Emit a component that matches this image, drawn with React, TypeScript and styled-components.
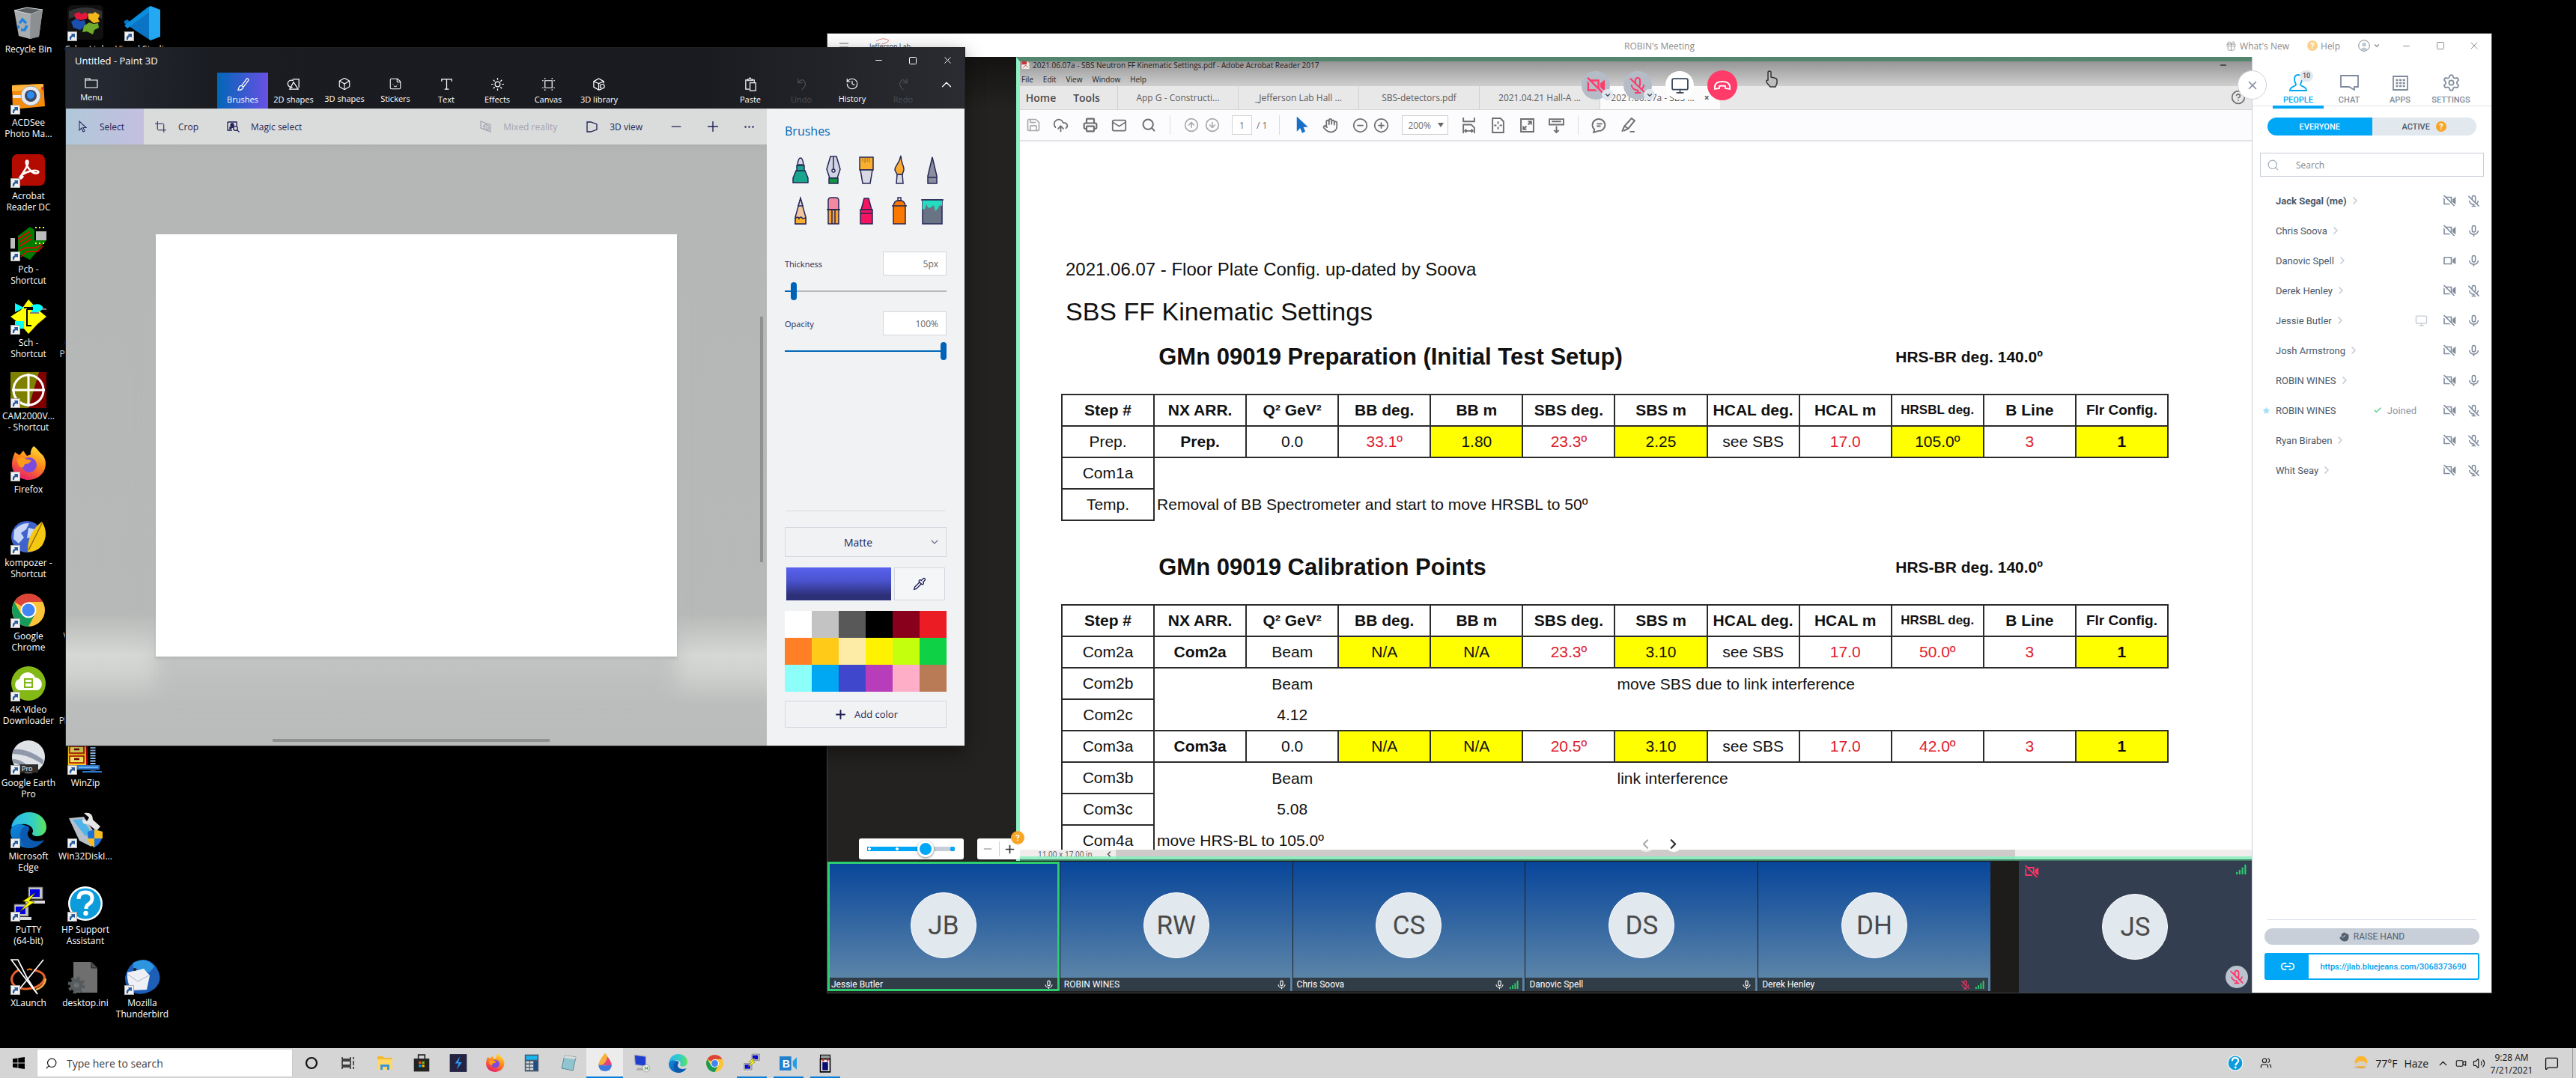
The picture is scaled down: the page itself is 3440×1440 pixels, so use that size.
import React from "react";
import styled, { createGlobalStyle, css } from "styled-components";
import {
  ChevronDown, ChevronLeft, ChevronRight, ChevronUp, X, Minus, Plus, Square, Ellipsis,
  CloudUpload, Printer, Mail, Search, CircleArrowUp, CircleArrowDown, Hand, CircleMinus, CirclePlus,
  Save, Gift, Monitor, Link2, Pipette, Crop, History,
  Sticker, Box, Star, Check, Settings, Volume2, Users,
  MessageSquare, CircleQuestionMark, Video,
} from "lucide-react";

const ui = '"Open Sans", "Noto Sans", sans-serif';
const meet = 'Roboto, "Liberation Sans", sans-serif';
const doc = '"Liberation Sans", Arial, sans-serif';

const Global = createGlobalStyle`
  * { box-sizing: border-box; }
  html, body { margin: 0; background: #000; }
  body { font-family: ${ui}; overflow: hidden; }
  button, input, select { font: inherit; color: inherit; margin: 0; }
  button { border: 0; background: none; padding: 0; cursor: pointer; }
  svg { display: block; flex: none; }
  h1, h2, h3, p, ul { margin: 0; padding: 0; }
  ul { list-style: none; }
`;

/* ---------- colour artwork ---------- */

type ArtProps = { s?: number };
const Svg = ({ s = 48, vb = "0 0 48 48", children }: { s?: number; vb?: string; children: React.ReactNode }) => (
  <svg width={s} height={s} viewBox={vb} aria-hidden="true">{children}</svg>
);

const RecycleArt = () => (
  <Svg>
    <path d="M5 7 22 3 43 6 38 42 26 45 11 41Z" fill="#a9adb0" />
    <path d="M5 7 22 3 43 6 27 12Z" fill="#5c5f61" stroke="#d9dcde" />
    <path d="M27 12 43 6 38 42 26 45Z" fill="#8b8f92" />
    <g fill="none" stroke="#1d84dd" strokeWidth="3.4">
      <path d="M12 24 16 19 21 24" /><path d="M22 27 19 33 14 33" /><path d="M11 31 10 27" />
    </g>
  </Svg>
);
const PuzzleArt = () => (
  <Svg>
    <rect width="48" height="46" rx="6" fill="#111" />
    <path d="M2 8q22-10 44 0v10q-22-8-44 0z" fill="#555" opacity=".5" />
    <path d="M9 12l6-3 4 3 5-3 4 4-2 5-8 2-7-2z" fill="#e2173d" />
    <path d="M28 11l6 0 3-2 6 4-2 5 2 4-8 2-7-6z" fill="#f0b81c" />
    <path d="M5 22l7-4 5 3 6-1 2 7-8 6-9-3z" fill="#1a4fae" />
    <path d="M22 28l7-5 6 2 6-1 1 6-6 3-2 6-8-4-6 1z" fill="#6eaa2c" />
  </Svg>
);
const VsCodeArt = () => (
  <Svg>
    <path d="M35 1 11 25 4 19 0 21 0 24 35 47z" fill="#0b74c4" />
    <path d="M0 27 4 31 35 8V1L31 3z" fill="#0a8ddc" />
    <path d="M35 1 48 6V42L35 47 33 45V3z" fill="#25a8f2" />
  </Svg>
);
const CameraArt = () => (
  <Svg>
    <path d="M2 9 44 7 46 37 3 41Z" fill="#f58a0c" /><path d="M2 9 44 7 44 14 2 17Z" fill="#ffb43c" />
    <path d="M3 22h14v4H3z" fill="#e9e9e9" />
    <circle cx="27" cy="23" r="13" fill="#e7e9ee" stroke="#9aa0ab" /><circle cx="27" cy="23" r="8" fill="#3b4a66" />
    <circle cx="27" cy="22" r="5" fill="#2c8cf0" /><circle cx="43" cy="13" r="2" fill="#c33" />
  </Svg>
);
const AcrobatArt = () => (
  <Svg>
    <rect x="2" y="3" width="44" height="42" rx="7" fill="#b30b00" />
    <path d="M12 35c4-6 14-20 11-23-3-2-4 5 4 13 6 6 12 3 10 1-3-3-17 0-23 6-3 4 0 5 3 0" fill="none" stroke="#fff" strokeWidth="2.6" />
  </Svg>
);
const PcbArt = () => (
  <Svg>
    <path d="M10 14 26 2 32 6V20H48L26 46 10 38Z" fill="#007c00" />
    <path d="M34 8h14v12H34z" fill="#bdbdbd" /><path d="M0 17h6v14H0z" fill="#bdbdbd" />
    <path d="M33 3h14M33 24h14" stroke="#ff0" strokeWidth="2" strokeDasharray="2 3" />
    <g stroke="#e00" strokeWidth="1.6" fill="none"><path d="M10 18 26 8M11 23 27 13M12 28 28 18M12 34 20 30H34L42 25M14 42 22 35H36L43 28" /></g>
  </Svg>
);
const SchArt = () => (
  <Svg>
    <path d="M0 24 14 15 24 1 36 14 48 24 36 34 24 47 12 33Z" fill="#ff0" />
    <path d="M6 6 18 12 6 18ZM27 9q14-5 17 4-6 7-16 5zM6 30h12v10H6z" fill="#0ff" />
    <path d="M22 14h8M22 14v22h6M18 12h12" stroke="#000" strokeWidth="2" fill="none" /><path d="M26 19h12M42 14h6" stroke="#808080" strokeWidth="2" />
  </Svg>
);
const CamArt = () => (
  <Svg>
    <rect width="48" height="48" fill="#808000" /><path d="M38 0H48V48H24Z" fill="#800000" />
    <circle cx="24" cy="24" r="20" fill="none" stroke="#fff" strokeWidth="3" /><path d="M24 2V46M2 24H46" stroke="#fff" strokeWidth="3" />
  </Svg>
);
const FirefoxArt = ({ s }: ArtProps) => (
  <Svg s={s}>
    <defs><linearGradient id="ff" x1=".8" y1="0" x2=".3" y2="1"><stop offset="0" stopColor="#ffe53a" /><stop offset=".45" stopColor="#ff8b16" /><stop offset="1" stopColor="#e6186c" /></linearGradient></defs>
    <path d="M6 9 12 13 17 7 22 14 27 12C26 6 30 2 31 1 36 4 37 8 41 11 47 16 48 24 46 31 43 40 34 46 24 46 12 46 2 37 2 26 2 18 4 14 6 9Z" fill="url(#ff)" />
    <circle cx="25" cy="26" r="10" fill="#7d4ae0" /><path d="M8 18q7-4 12 0l8 2q-3 5-9 5-2 8-8 2z" fill="#ff9a1b" />
  </Svg>
);
const KompozerArt = () => (
  <Svg>
    <circle cx="22" cy="24" r="21" fill="#3f63cc" /><path d="M5 15q9-10 20-9l-4 8-7 5 4 6-7 8-7-6zM24 12l8 2-2 10-8 2z" fill="#c8d6fa" />
    <path d="M42 4q10 16 0 32-8 9-19 8 0-14 4-22 6-12 15-18z" fill="#f4c912" /><path d="M42 6 24 42" stroke="#a06b00" strokeWidth="1.6" />
  </Svg>
);
const ChromeArt = ({ s }: ArtProps) => (
  <Svg s={s}>
    <circle cx="24" cy="24" r="22" fill="#fbc43a" /><path d="M24 24 5 13A22 22 0 0 1 43 13H24z" fill="#dc4437" />
    <path d="M5 13A22 22 0 0 0 24 46L33 29 24 24 14 29z" fill="#169c5a" />
    <circle cx="24" cy="24" r="10.5" fill="#fff" /><circle cx="24" cy="24" r="8.5" fill="#4285f4" />
  </Svg>
);
const FourKArt = () => (
  <Svg>
    <circle cx="24" cy="24" r="23" fill="#84b816" /><path d="M11 33a8 8 0 0 1 1-15 11 11 0 0 1 21-2 9 9 0 0 1 4 17z" fill="#fff" />
    <path d="M19 18h10v11H19zM19 23h10" fill="none" stroke="#84b816" strokeWidth="2" />
  </Svg>
);
const EarthArt = () => (
  <Svg>
    <circle cx="24" cy="24" r="22" fill="#dfe2e6" /><path d="M4 14q18-2 40 14l-1 6Q22 20 3 20zM3 27q15 0 28 18l-8 1Q14 33 3 32z" fill="#8f99a9" />
    <path d="M12 34h25v11H12z" fill="#2d2d2d" /><text x="15" y="43" fontSize="9" fill="#fff" fontFamily={ui}>Pro</text>
  </Svg>
);
const EdgeArt = ({ s }: ArtProps) => (
  <Svg s={s}>
    <defs>
      <linearGradient id="e1" x1="0" x2="1"><stop offset="0" stopColor="#2bb7f0" /><stop offset=".6" stopColor="#33cfc5" /><stop offset="1" stopColor="#5fe45a" /></linearGradient>
      <linearGradient id="e2" x1="0" x2="1" y2="1"><stop offset="0" stopColor="#0e8be0" /><stop offset="1" stopColor="#0a4f9e" /></linearGradient>
    </defs>
    <path d="M1 20C3 8 13 0 25 0 39 0 48 10 48 20 48 28 42 32 36 32 31 32 29 30 29 28 32 25 29 17 20 16 11 15 4 19 1 20Z" fill="url(#e1)" />
    <path d="M0 26C0 17 10 14 18 17 24 19 26 23 24 25 20 28 22 40 36 40 40 40 43 38 45 37 40 44 33 48 25 48 11 48 0 38 0 26Z" fill="url(#e2)" />
    <path d="M13 30c0-7 5-12 9-12 4 1 4 5 2 7-4 5 2 18 21 12-6 8-14 11-20 11-8-2-12-10-12-18z" fill="#0b5ab0" />
  </Svg>
);
const PuttyArt = ({ s }: ArtProps) => (
  <Svg s={s}>
    <path d="M24 2h19v16H24z" fill="#c4c4c4" stroke="#555" /><path d="M26 5h13v10H26z" fill="#0000e0" /><path d="M20 20h26v4H20z" fill="#dcdcdc" />
    <path d="M5 25h19v16H5z" fill="#c4c4c4" stroke="#555" /><path d="M7 28h13v10H7z" fill="#0000e0" /><path d="M2 42h26v4H2z" fill="#dcdcdc" />
    <path d="M34 9 16 21 24 22 12 35 32 22 25 20z" fill="#ff0" stroke="#220" strokeWidth=".6" />
  </Svg>
);
const XArt = () => (
  <Svg>
    <path d="M17 13C4 15-3 27 5 35c8 8 30 6 38-4 5-7 2-14-12-16" fill="none" stroke="#e8622a" strokeWidth="3" />
    <path d="M34 41q12-4 13-15" fill="none" stroke="#f5b04a" strokeWidth="2.5" />
    <path d="M1 1H10L22 25 36 47 16 21ZM44 1 22 28 8 45" stroke="#fff" strokeWidth="1.7" fill="#000" /><path d="M22 15q4-3 7 0" stroke="#f70" strokeWidth="2" fill="none" />
  </Svg>
);
const WinZipArt = () => (
  <Svg>
    <path d="M0 2h26v34H0z" fill="#fbd21a" stroke="#b00" strokeWidth="2" /><path d="M3 10h19v9H3zM3 23h19v9H3z" fill="#fff36b" stroke="#b00" strokeWidth="1.5" />
    <path d="M9 14h7M9 27h7" stroke="#700" strokeWidth="2.5" /><path d="M34 4v40" stroke="#a6d2ff" strokeWidth="7" strokeDasharray="2 1.5" />
    <path d="M14 36h28v4H14zM20 44h26" stroke="#2c78d0" strokeWidth="2" fill="#6cb4f8" />
  </Svg>
);
const DiskArt = () => (
  <Svg>
    <path d="M2 8 22 6 38 30 32 46 16 38z" fill="#b9bfca" /><path d="M7 10 20 9 32 27 24 32z" fill="#4fb4e9" />
    <path d="M22 1q12-2 12 9l10 9-5 6-11-9q-9 1-8-7l6 3 3-5z" fill="#e7e7e7" />
    <path d="M27 26 36 23 47 26Q48 40 36 47 26 40 27 26Z" fill="#1c70d6" /><path d="M36 23 47 26V35H36ZM36 35V47Q27 42 27 35Z" fill="#f9bd1e" />
  </Svg>
);
const HelpArt = ({ s }: ArtProps) => (
  <Svg s={s}>
    <circle cx="24" cy="24" r="23" fill="#fff" /><circle cx="24" cy="24" r="20.5" fill="#0c9bdb" />
    <path d="M15 18q0-9 9-9t9 8q0 5-5 8-3 2-3 6" fill="none" stroke="#fff" strokeWidth="5" /><circle cx="24.5" cy="37" r="3.2" fill="#fff" />
  </Svg>
);
const IniArt = () => (
  <Svg>
    <path d="M8 4h24l8 8v33H8z" fill="#6f6f6f" /><path d="M32 4v8h8" fill="#4d4d4d" stroke="#222" />
    <circle cx="12" cy="35" r="6" fill="none" stroke="#555b5f" strokeWidth="5" /><circle cx="12" cy="35" r="9.5" fill="none" stroke="#555b5f" strokeWidth="4" strokeDasharray="4 3.5" />
  </Svg>
);
const BirdArt = () => (
  <Svg>
    <path d="M12 5Q30-5 42 10 54 28 40 40 26 50 12 45 0 38 1 24 4 12 12 5Z" fill="#1d5fb8" /><path d="M12 5Q30-4 40 10l-6 8L12 12z" fill="#2d94e0" />
    <path d="M4 18 26 13 34 22 30 41 10 42Q3 32 4 18Z" fill="#eef0f5" /><path d="M4 20 18 30 33 22" fill="none" stroke="#aab4c6" />
    <circle cx="14" cy="14" r="2" fill="#222" />
  </Svg>
);
const BlankArt = () => <Svg><rect x="8" y="6" width="32" height="36" fill="#446" /></Svg>;

/* ---------- line artwork ---------- */

const CamOff = ({ s = 18, c = "#7f8b9c", bg = "#fff" }) => (
  <svg width={s} height={s} viewBox="0 0 18 18" fill="none" stroke={c} strokeWidth="1.6" aria-hidden="true">
    <path d="M2 4.5h9.5v9H2z" /><path d="M14 7.5 16.5 5.5v7L14 10.5z" fill={c} />
    <path d="M1 3.500 14.500 17" stroke={bg} strokeWidth="2" /><path d="M1.500 2 15.500 16" />
  </svg>
);
const CamOn = ({ s = 18, c = "#7f8b9c" }) => (
  <svg width={s} height={s} viewBox="0 0 18 18" fill="none" stroke={c} strokeWidth="1.6" aria-hidden="true">
    <path d="M2 5h9.5v8.5H2z" /><path d="M14 8 16.5 6v6.5L14 11z" fill={c} />
  </svg>
);
const MicOn = ({ s = 18, c = "#7f8b9c" }) => (
  <svg width={s} height={s} viewBox="0 0 18 18" fill="none" stroke={c} strokeWidth="1.6" aria-hidden="true">
    <rect x="6.7" y="1.5" width="4.6" height="9" rx="2.3" /><path d="M2.8 8.5a6.2 5.4 0 0 0 12.400 0M9 14v3" />
  </svg>
);
const MicOff = ({ s = 18, c = "#7f8b9c", bg = "#fff" }) => (
  <svg width={s} height={s} viewBox="0 0 18 18" fill="none" stroke={c} strokeWidth="1.6" aria-hidden="true">
    <rect x="6.7" y="1.5" width="4.6" height="9" rx="2.3" /><path d="M2.8 8.500a6.2 5.4 0 0 0 12.400 0M9 14v3M6 16.5h6" />
    <path d="M1 3.500 15 17.500" stroke={bg} strokeWidth="1.800" /><path d="M1.500 2 16.500 16.500" />
  </svg>
);
const Signal = ({ s = 14 }) => (
  <svg width={s} height={s} viewBox="0 0 14 14" aria-hidden="true"><path d="M1 10h2v3H1zM4.500 7.500h2V13h-2zM8 4.500h2V13H8zM11.500 1h2v12h-2z" fill="#2ecc71" /></svg>
);
const Pointer = ({ s = 16, c = "#2f2f63", fill = "none" }) => (
  <svg width={s} height={s} viewBox="0 0 16 16" aria-hidden="true"><path d="M4 1v12l3-3 2 5 2-1-2-4.500h4z" fill={fill} stroke={c} strokeWidth="1.1" /></svg>
);
const Line = ({ d, s = 20, w = 1.3, children }: { d: string; s?: number; w?: number; children?: React.ReactNode }) => (
  <svg width={s} height={s} viewBox="0 0 20 20" fill="none" stroke="currentColor" strokeWidth={w} aria-hidden="true"><path d={d} />{children}</svg>
);

/* ---------- desktop ---------- */

const Desktop = styled.div`
  display: flex; flex-direction: column; height: 100vh; min-height: 720px; background: #000; overflow: hidden;
`;
const Workspace = styled.main`flex: 1; position: relative; min-height: 0; overflow: hidden;`;
const IconGrid = styled.ul`
  display: grid; grid-template-columns: repeat(3, 76px); grid-template-rows: repeat(14, 98px);
`;
const IconItem = styled.li<{ $c: number; $r: number }>`
  grid-column: ${p => p.$c}; grid-row: ${p => p.$r}; display: flex; flex-direction: column; align-items: center; padding-top: 7px;
  color: #fff; font-size: 12px; line-height: 15px; text-align: center; white-space: pre;
`;
const Picture = styled.span`position: relative; display: block; margin-bottom: 3px;`;
const Badge = styled.span`
  position: absolute; left: 0; bottom: 0; width: 13px; height: 13px; background: #f2f2f2; border: 1px solid #aaa;
`;
const ShortcutMark = () => (
  <Badge><svg width="11" height="11" viewBox="0 0 11 11"><path d="M2 10Q1 5 5 4L4 2 9 2 9 7 7 6Q4 6 4 10Z" fill="#2b5c9e" /></svg></Badge>
);
const icons: [number, number, string, React.ReactNode, boolean][] = [
  [1, 1, "Recycle Bin", <RecycleArt />, false],
  [1, 2, "ACDSee\nPhoto Ma...", <CameraArt />, true],
  [1, 3, "Acrobat\nReader DC", <AcrobatArt />, true],
  [1, 4, "Pcb -\nShortcut", <PcbArt />, true],
  [1, 5, "Sch -\nShortcut", <SchArt />, true],
  [1, 6, "CAM2000V...\n- Shortcut", <CamArt />, true],
  [1, 7, "Firefox", <FirefoxArt />, true],
  [1, 8, "kompozer -\nShortcut", <KompozerArt />, true],
  [1, 9, "Google\nChrome", <ChromeArt />, true],
  [1, 10, "4K Video\nDownloader", <FourKArt />, true],
  [1, 11, "Google Earth\nPro", <EarthArt />, true],
  [1, 12, "Microsoft\nEdge", <EdgeArt />, true],
  [1, 13, "PuTTY\n(64-bit)", <PuttyArt />, true],
  [1, 14, "XLaunch", <XArt />, true],
  [2, 1, "CyberLink\nMedia", <PuzzleArt />, true],
  [2, 5, "CyberLink\nPowerDirect", <BlankArt />, false],
  [2, 9, "VLC media", <BlankArt />, false],
  [2, 10, "Adobe\nPhotoshop E", <BlankArt />, false],
  [2, 11, "WinZip", <WinZipArt />, true],
  [2, 12, "Win32DiskI...", <DiskArt />, true],
  [2, 13, "HP Support\nAssistant", <HelpArt />, true],
  [2, 14, "desktop.ini", <IniArt />, false],
  [3, 1, "Visual Studio", <VsCodeArt />, true],
  [3, 14, "Mozilla\nThunderbird", <BirdArt />, true],
];

/* ---------- Paint 3D window ---------- */

const PaintWindow = styled.section`
  position: absolute; left: 88px; top: 64px; width: 1200px; max-width: calc(100% - 88px); height: 932px;
  display: flex; flex-direction: column; background: #f1f2f4; box-shadow: 0 0 0 1px #222, 0 8px 24px rgba(0,0,0,.45); overflow: hidden;
`;
const PaintHeader = styled.header`
  height: 81px; flex: none; color: #fff; background: linear-gradient(90deg, #282c35, #1a1c22 16%, #191b21 70%, #2a2c31);
`;
const PaintTitle = styled.div`
  height: 33px; display: flex; align-items: center; padding-left: 12px; font-size: 13px;
  h1 { font: inherit; flex: 1; }
`;
const WinButton = styled.button<{ $w?: number }>`
  width: ${p => p.$w ?? 46}px; height: 32px; display: grid; place-items: center;
`;
const Ribbon = styled.div`height: 48px; display: flex;`;
const RibbonTab = styled.button<{ $on?: boolean; $dim?: boolean }>`
  width: 68px; height: 48px; display: flex; flex-direction: column; align-items: center; padding-top: 6px; gap: 3px;
  font-size: 11px; line-height: 16px; white-space: nowrap; color: ${p => (p.$dim ? "#4b4d53" : "#fff")};
  ${p => p.$on && css`background: linear-gradient(90deg, #0166b8, #6a50e4);`}
`;
const Spacer = styled.div<{ $w?: number }>`${p => (p.$w ? css`width: ${p.$w}px; flex: none;` : css`flex: 1;`)}`;
const PaintBody = styled.div`flex: 1; display: grid; grid-template-columns: minmax(0, 1fr) 264px; min-height: 0;`;
const PaintMain = styled.div`display: flex; flex-direction: column; min-height: 0;`;
const ToolBar = styled.div`
  height: 48px; flex: none; display: flex; background: #dadcdc; color: #1f1f55; font-size: 12px;
`;
const ToolButton = styled.button<{ $on?: boolean; $dim?: boolean; $w?: number }>`
  display: flex; align-items: center; gap: 15px; padding: 0 14px; white-space: nowrap; color: ${p => (p.$dim ? "#a3a4b0" : "#1f1f55")};
  ${p => p.$w && css`width: ${p.$w}px; justify-content: center; padding: 0;`}
  ${p => p.$on && css`width: 104px; background: linear-gradient(90deg, #b0c8d9, #c4bfe0);`}
`;
const CanvasArea = styled.div`
  position: relative; flex: 1; display: grid; place-items: center; min-height: 0;
  background: linear-gradient(#b0b2b1, #b5b7b6 12px, #b7b9b8 78%, #d6d8d5 85%, #d0d2cf 88%, #bcbebd 93%, #b9bbba);
`;
const Canvas = styled.div`width: calc(100% - 240px); aspect-ratio: 696 / 564; background: #fff; box-shadow: 0 62px 24px 0 rgba(184,187,186,.7), 0 3px 3px rgba(150,150,150,.5);`;
const VBar = styled.i`position: absolute; right: 5px; top: 230px; width: 4px; height: 328px; background: #8f9191;`;
const HBar = styled.i`position: absolute; bottom: 5px; left: 276px; width: 370px; height: 4px; background: #8f9191;`;
const SidePanel = styled.aside`
  background: #f1f2f4; padding: 18px 24px 24px; display: flex; flex-direction: column; color: #1f1f55; font-size: 11px;
  h2 { font-size: 16px; font-weight: 400; line-height: 24px; color: #0067b8; }
`;
const BrushGrid = styled.div`display: grid; grid-template-columns: repeat(5, 44px); margin: 19px 0 0 -1px; row-gap: 14px;`;
const Brush = styled.button`display: grid; place-items: center; height: 41px;`;
const Field = styled.div`display: grid; grid-template-columns: 1fr 85px; align-items: center; margin-top: 34px; & + & { margin-top: 15px; }`;
const ValueBox = styled.input`
  height: 32px; width: 85px; border: 1px solid #d3d6de; background: #fff; text-align: right; padding: 0 10px; color: #666; font-size: 12px;
`;
const Range = styled.input<{ $v: number }>`
  grid-column: 1 / 3; appearance: none; width: 100%; height: 24px; margin-top: 9px; background: transparent;
  &::-webkit-slider-runnable-track { height: 2px; background: linear-gradient(90deg, #0067b8 ${p => p.$v}%, #b5b7bb ${p => p.$v}%); }
  &::-webkit-slider-thumb { appearance: none; width: 8px; height: 24px; margin-top: -11px; border-radius: 4px; background: #0063b8; }
`;
const Rule = styled.hr`border: 0; border-top: 1px solid #d6d9df; margin: auto 2px 21px; width: calc(100% - 4px);`;
const SelectWrap = styled.label`
  position: relative; display: block; svg { position: absolute; right: 8px; top: 12px; pointer-events: none; color: #6a6a86; }
`;
const Matte = styled.select`
  appearance: none; width: 100%; height: 40px; border: 1px solid #d3d6de; background: transparent; text-align-last: center; font-size: 14px; padding-right: 20px;
`;
const ColorRow = styled.div`display: grid; grid-template-columns: 140px 68px; gap: 4px; margin: 14px 2px;`;
const CurrentColor = styled.button`height: 44px; background: linear-gradient(#5862ee, #4b53cf 40%, #2c3077 85%);`;
const Picker = styled.button`height: 44px; border: 1px solid #d3d6de; background: #f5f6f8; display: grid; place-items: center;`;
const Palette = styled.div`display: grid; grid-template-columns: repeat(6, 36px); grid-auto-rows: 36px;`;
const Swatch = styled.button<{ $c: string }>`background: ${p => p.$c};`;
const AddColor = styled.button`
  height: 36px; margin-top: 12px; border: 1px solid #d3d6de; display: flex; align-items: center; justify-content: center; gap: 9px; font-size: 13px;
`;
const palette = ["#ffffff", "#c3c3c3", "#585858", "#000000", "#88001b", "#ec1c24", "#ff7f27", "#ffca18", "#fdeca6", "#fff200", "#c4ff0e", "#0ed145", "#8cfffb", "#00a8f3", "#3f48cc", "#b83dba", "#ffaec8", "#b97a56"];

const ink = { stroke: "#262657", strokeWidth: 1.5 };
const brushes: [string, React.ReactNode][] = [
  ["Marker", <><path d="M12 37V31L16 21H28L32 31V37Z" fill="#19a68c" {...ink} /><path d="M17 14H27V21H17Z" fill="#19a68c" {...ink} /><path d="M18 13Q19 4 22 4T26 13Z" fill="#d5d6e0" {...ink} /></>],
  ["Calligraphy pen", <><path d="M18 2H26L31 19 27 31H17L13 19Z" fill="#d0d3e2" {...ink} /><path d="M22 3V19" {...ink} /><circle cx="22" cy="21" r="2" fill="#fff" {...ink} /><path d="M16 31H28V38H16Z" fill="#12953f" {...ink} /></>],
  ["Oil brush", <><path d="M13 3H31V20H13Z" fill="#fbb02d" {...ink} /><path d="M14 20H30L27 38H17Z" fill="#d8d9e2" {...ink} /><path d="M17 4v5M20 4v7M23 4v5M26 4v6" stroke="#a2701c" /></>],
  ["Watercolor", <><path d="M24 1C22 12 16 14 16 20L19 26H26L28 20C29 15 24 12 24 1Z" fill="#fbab2d" {...ink} /><path d="M19 26H26L27 38H18Z" fill="#d8d9e2" {...ink} /></>],
  ["Pixel pen", <><path d="M22 3 28 28V38H16V28Z" fill="#8b8e9b" {...ink} /><path d="M16 30H28" {...ink} /></>],
  ["Pencil", <><path d="M22 3 29 28V37H15V28Z" fill="#f1c5a0" {...ink} /><path d="M15 30q3-4 5 0 2-4 5 0l4-1V37H15Z" fill="#fbb02d" {...ink} /><path d="M19 13h6l-3-10z" fill="#d5d6e0" {...ink} /></>],
  ["Eraser", <><path d="M15 18V6Q15 2 19 2H25Q29 2 29 6V18Z" fill="#f389a0" {...ink} /><path d="M15 18H29V37H15Z" fill="#fba22d" {...ink} /><path d="M13 18H31M20 18V37M24 18V37" {...ink} /></>],
  ["Crayon", <><path d="M19 3H25L29 18H15Z" fill="#f5145f" {...ink} /><path d="M14 18H30V37H14ZM14 23H30" fill="#f5145f" {...ink} /></>],
  ["Spray can", <><path d="M14 13Q15 7 19 6H25Q29 7 30 13V37H14Z" fill="#fa7800" {...ink} /><path d="M12 13H32M20 2h4v4h-4z" {...ink} fill="none" /></>],
  ["Fill", <><path d="M9 5H35V37H9Z" fill="#687484" {...ink} /><path d="M9 5H35V13L32 12 29 17 26 20 24 12 20 15 17 16 14 11 12 17 9 18Z" fill="#26dcc0" /><path d="M7 5H37" {...ink} /></>],
];

const ribbonTabs: [string, React.ReactNode][] = [
  ["Brushes", <Line s={19} d="M15.500 2q3 0 2 3L10.500 14 8 12zM8 12q-4 0-4 4l-1 2q6 1 7.500-4" />],
  ["2D shapes", <Line s={19} d="M8 3H17V15M9.500 7 4 17H16ZM8 14A5 5 0 1 1 9 5" />],
  ["3D shapes", <Box size={18} strokeWidth={1.5} />],
  ["Stickers", <Sticker size={18} strokeWidth={1.4} />],
  ["Text", <Line s={19} d="M3 6V3H17V6M10 3V17M7 17H13" />],
  ["Effects", <Line s={19} d="M10 1V4M10 16V19M1 10H4M16 10H19M4 4 6 6M14 14 16 16M16 4 14 6M4 16 6 14"><circle cx="10" cy="10" r="3.500" /></Line>],
  ["Canvas", <Line s={19} d="M5 5H15V15H5ZM1 5H3M17 5H19M1 15H3M17 15H19M5 1V3M15 1V3M5 17V19M15 17V19" />],
  ["3D library", <Line s={19} d="M13 17 9 18 2 14V6L9 2 16 6V9M2 6 9 9 16 6M9 9V18"><circle cx="14" cy="13" r="3" /></Line>],
];

const Paint = () => (
  <PaintWindow aria-label="Untitled - Paint 3D">
    <PaintHeader>
      <PaintTitle>
        <h1>Untitled - Paint 3D</h1>
        <WinButton aria-label="Minimize"><Minus size={13} strokeWidth={1.8} /></WinButton>
        <WinButton aria-label="Maximize"><Square size={12} strokeWidth={2} /></WinButton>
        <WinButton aria-label="Close"><X size={15} strokeWidth={1.5} /></WinButton>
      </PaintTitle>
      <Ribbon>
        <RibbonTab>
          <svg width="18" height="16" viewBox="0 0 18 16" fill="none" stroke="#fff" strokeWidth="1.2"><path d="M1 2H7V4H17V14H1Z M1 4H7" /></svg>Menu
        </RibbonTab>
        <Spacer $w={134} />
        {ribbonTabs.map(([t, i], n) => <RibbonTab key={t} $on={n === 0}>{i}{t}</RibbonTab>)}
        <Spacer />
        <RibbonTab><Line s={19} d="M8 17H3V4H6M12 4H15V7M6 5V3H8L9 1 10 3H12V5ZM9 8H17V19H9Z" />Paste</RibbonTab>
        <RibbonTab $dim><Line s={19} d="M5 2V8H11M5 8Q10 1 14 6T10 18" />Undo</RibbonTab>
        <RibbonTab><History size={18} strokeWidth={1.5} />History</RibbonTab>
        <RibbonTab $dim><Line s={19} d="M15 2V8H9M15 8Q10 1 6 6T10 18" />Redo</RibbonTab>
        <WinButton $w={48} aria-label="Collapse ribbon"><ChevronUp size={22} strokeWidth={1.4} /></WinButton>
      </Ribbon>
    </PaintHeader>
    <PaintBody>
      <PaintMain>
        <ToolBar>
          <ToolButton $on><Pointer />Select</ToolButton>
          <ToolButton><Crop size={17} strokeWidth={1.4} />Crop</ToolButton>
          <Spacer $w={10} />
          <ToolButton>
            <svg width="17" height="17" viewBox="0 0 17 17" fill="none" stroke="#1f1f55" strokeWidth="1.3"><path d="M1 2h12v6M1 2v11h6" /><circle cx="7" cy="6" r="2" fill="#1f1f55" /><path d="M4 12V9h5" fill="#1f1f55" /><circle cx="11.5" cy="10.5" r="2.8" /><path d="m13.500 12.500 3 3" /></svg>
            Magic select
          </ToolButton>
          <Spacer />
          <ToolButton $dim>
            <svg width="17" height="18" viewBox="0 0 17 18" fill="none" stroke="currentColor" strokeWidth="1.2"><path d="M2 2 15 7V16L2 11ZM6 7.500 9 6 13 9V13L9 14 6 11ZM6 7.500 10 10V14" /></svg>
            Mixed reality
          </ToolButton>
          <Spacer $w={10} />
          <ToolButton>
            <svg width="17" height="17" viewBox="0 0 17 17" fill="none" stroke="currentColor" strokeWidth="1.3"><path d="M7 15H2V2H7L15 5V12Z" /></svg>
            3D view
          </ToolButton>
          <Spacer $w={6} />
          <ToolButton $w={49} aria-label="Zoom out"><Minus size={20} strokeWidth={1.5} /></ToolButton>
          <ToolButton $w={49} aria-label="Zoom in"><Plus size={22} strokeWidth={1.5} /></ToolButton>
          <ToolButton $w={48} aria-label="More"><Ellipsis size={17} strokeWidth={1.5} /></ToolButton>
        </ToolBar>
        <CanvasArea><Canvas /><VBar /><HBar /></CanvasArea>
      </PaintMain>
      <SidePanel>
        <h2>Brushes</h2>
        <BrushGrid>
          {brushes.map(([n, art]) => <Brush key={n} aria-label={n}><svg width="44" height="40" viewBox="0 0 44 40">{art}</svg></Brush>)}
        </BrushGrid>
        <Field>
          <label htmlFor="thick">Thickness</label><ValueBox aria-label="Thickness value" defaultValue="5px" />
          <Range id="thick" type="range" $v={6} defaultValue={4} />
        </Field>
        <Field>
          <label htmlFor="opac">Opacity</label><ValueBox aria-label="Opacity value" defaultValue="100%" />
          <Range id="opac" type="range" $v={100} defaultValue={100} />
        </Field>
        <Rule />
        <SelectWrap><Matte aria-label="Material"><option>Matte</option></Matte><ChevronDown size={16} strokeWidth={1.6} /></SelectWrap>
        <ColorRow>
          <CurrentColor aria-label="Current color" />
          <Picker aria-label="Eyedropper"><Pipette size={18} strokeWidth={1.7} /></Picker>
        </ColorRow>
        <Palette>{palette.map(c => <Swatch key={c} $c={c} aria-label={c} />)}</Palette>
        <AddColor><Plus size={19} strokeWidth={2.4} />Add color</AddColor>
      </SidePanel>
    </PaintBody>
  </PaintWindow>
);

/* ---------- meeting window ---------- */

const MeetWindow = styled.section`
  position: absolute; left: 1105px; right: 113px; top: 45px; bottom: 74px; display: flex; flex-direction: column;
  background: #fff; font-family: ${meet}; box-shadow: 0 0 0 1px #444;
`;
const MeetTitle = styled.header`
  height: 31px; flex: none; display: grid; grid-template-columns: 1fr auto 1fr; align-items: center; font-family: ${ui}; font-size: 12px; color: #8c8c8c;
  h1 { font: inherit; }
`;
const Brand = styled.div`
  display: flex; align-items: center; gap: 28px; padding-left: 16px; font: 9px ${ui}; color: #444;
  > svg { color: #999; } span { position: relative; } span svg { position: absolute; left: 8px; top: -4px; }
`;
const TitleTools = styled.div`display: flex; justify-content: flex-end; align-items: center;`;
const TitleItem = styled.button<{ $mr?: number }>`display: flex; align-items: center; gap: 4px; margin-right: ${p => p.$mr ?? 0}px;`;
const Dot = styled.span<{ $s?: number; $soft?: boolean }>`
  width: ${p => p.$s ?? 14}px; height: ${p => p.$s ?? 14}px; border-radius: 50%; background: ${p => (p.$soft ? "#fbd28c" : "#f8a526")}; color: #fff;
  font: bold 11px ${meet}; display: grid; place-items: center;
`;
const MeetBody = styled.div`flex: 1; min-height: 0; display: grid; grid-template-columns: minmax(0, 1fr) 320px;`;
const Stage = styled.div`position: relative; display: flex; flex-direction: column; min-width: 0; min-height: 0; background: #242220;`;
const ShareRow = styled.div`flex: 1; min-height: 0; padding-left: 252px; display: flex; background: linear-gradient(#141312, #242220 70px);`;
const Share = styled.div`
  position: relative; flex: 1; min-width: 0; display: flex; flex-direction: column; background: #fff; overflow: hidden;
  border-left: 5px solid #8ff0c4; border-top: 6px solid #54866f; font-family: ${ui};
`;
const PdfTitle = styled.div`
  height: 33px; flex: none; padding: 0 2px; font-size: 10px; color: #222; background: linear-gradient(#969696, #cfcfcf);
`;
const PdfName = styled.div`display: flex; align-items: center; gap: 4px; height: 10px; line-height: 10px; span { flex: 1; }`;
const PdfMenu = styled.nav`display: flex; gap: 13px; height: 17px; margin-top: 5px; align-items: center; color: #1c1c1c;`;
const PdfTabs = styled.nav`
  height: 32px; flex: none; display: flex; align-items: stretch; background: #e9e8e9; border-bottom: 1px solid #d6d6d6; font-size: 12px; color: #5c5c5c;
`;
const PdfTab = styled.button<{ $on?: boolean; $w: number; $home?: boolean }>`
  width: ${p => p.$w}px; white-space: nowrap; display: flex; align-items: center; justify-content: center; gap: 13px;
  border-left: ${p => (p.$home ? 0 : 1)}px solid #d0d0d0; background: ${p => (p.$on ? "#fcfbfc" : "transparent")};
  ${p => p.$home && css`font-size: 14px; font-weight: 600; color: #4c4c4c;`}
`;
const PdfTools = styled.div`
  height: 42px; flex: none; display: flex; align-items: center; background: #fcfbfd; border-bottom: 2px solid #e3e3e5; color: #6e6e6e; font-size: 12px;
`;
const PdfTool = styled.button<{ $w?: number; $dim?: boolean }>`
  width: ${p => p.$w ?? 39}px; height: 30px; display: grid; place-items: center; color: ${p => (p.$dim ? "#a9a9a9" : "#6e6e6e")};
`;
const Sep = styled.i<{ $l: number; $r: number }>`width: 1px; height: 26px; background: #dcdcde; margin: 0 ${p => p.$r}px 0 ${p => p.$l}px;`;
const PageBox = styled.input`width: 27px; height: 26px; border: 1px solid #d5d5d5; background: #fff; text-align: center; padding: 0; margin-right: 6px;`;
const ZoomBox = styled.label`
  position: relative; margin: 0 8px 0 14px; svg { position: absolute; right: 6px; top: 10px; pointer-events: none; }
  select { appearance: none; width: 62px; height: 26px; border: 1px solid #cfcfcf; background: #fff; padding: 0 7px; }
`;
const Page = styled.div`
  flex: 1; min-height: 0; overflow: hidden; padding: 156px 111px 0 55px; font-family: ${doc}; color: #111; background: #fff;
`;
const DocNote = styled.p`padding-left: 6px; font-size: 24px; line-height: 30px;`;
const DocTitle = styled.h2`padding-left: 6px; margin-top: 21px; font-size: 34px; font-weight: 400; line-height: 40px;`;
const DocHead = styled.div`
  display: grid; grid-template-columns: repeat(12, 1fr); align-items: center; margin: 23px 0 31px; white-space: nowrap;
  h3 { grid-column: 2 / 10; padding-left: 7px; font-size: 31px; line-height: 36px; }
  strong { grid-column: 10 / 13; padding-left: 5px; font-size: 21px; }
`;
const DocTable = styled.table`
  width: 100%; table-layout: fixed; border-collapse: collapse; font-size: 21px; line-height: 24px; margin-bottom: 44px;
  tr { height: 42px; }
`;
const Cell = styled.td<{ $line?: boolean; $y?: boolean; $red?: boolean; $b?: boolean; $left?: boolean }>`
  padding: 0 0 0 ${p => (p.$left ? 3 : 0)}px; white-space: nowrap; text-align: ${p => (p.$left ? "left" : "center")};
  ${p => p.$line && css`border: 2px solid #2b2b2b;`}
  ${p => p.$y && css`background: #ff0;`}
  ${p => p.$red && css`color: #e0202c;`}
  ${p => p.$b && css`font-weight: 700;`}
`;
const HeadCell = styled.th<{ $s?: number }>`
  padding: 0; border: 2px solid #2b2b2b; white-space: nowrap; font-size: ${p => p.$s ?? 21}px;
`;
const PdfStatus = styled.div`
  height: 15px; flex: none; display: flex; align-items: flex-start; background: #f1eded; font-size: 10px; line-height: 12px; color: #555; overflow: hidden;
  span { padding-left: 24px; width: 113px; }
  i { margin-left: 3px; height: 15px; width: 73%; background: #cfcbcb; }
`;
const ShareBottom = styled.i`position: absolute; left: 0; right: 0; bottom: 0; height: 6px; background: #7ff0bcd0; border-bottom: 2px solid #3e7c60;`;
const HandPointer = styled.svg`position: absolute; left: calc(56% + 72px); top: 12px;`;

const Controls = styled.div`position: absolute; top: 49px; left: 0; right: 0; height: 40px; display: flex; justify-content: center; align-items: center; gap: 18px; pointer-events: none;`;
const Round = styled.button<{ $bg: string; $s?: number }>`
  position: relative; width: ${p => p.$s ?? 38}px; height: ${p => p.$s ?? 38}px; border-radius: 50%; background: ${p => p.$bg}; display: grid; place-items: center; color: #fff;
`;
const MiniDrop = styled.span`
  position: absolute; right: -4px; bottom: -1px; width: 15px; height: 15px; border-radius: 50%; background: #dfe6ed; color: #39465a; display: grid; place-items: center;
`;
const Pager = styled.div`position: absolute; left: 0; right: 0; bottom: 188px; display: flex; justify-content: center; gap: 15px; pointer-events: none;`;
const PageArrow = styled.button<{ $dim?: boolean }>`
  width: 22px; height: 22px; border-radius: 50%; background: ${p => (p.$dim ? "#ffffffa0" : "#fff")}; color: ${p => (p.$dim ? "#aaa" : "#333")}; display: grid; place-items: center;
`;
const Floaters = styled.div`position: absolute; left: 42px; bottom: 178px; display: flex; gap: 18px; align-items: flex-end;`;
const LayoutBox = styled.label`width: 140px; height: 28px; border-radius: 3px; background: #fff; display: grid; place-items: center;`;
const LayoutRange = styled.input`
  appearance: none; width: 137px; height: 22px; background: transparent;
  &::-webkit-slider-runnable-track {
    height: 6px; border-radius: 3px;
    background: radial-gradient(circle 2px at 12px 3px, #fff 99%, transparent), radial-gradient(circle 2px at 49px 3px, #fff 99%, transparent),
      radial-gradient(circle 3px at 123px 3px, #00a7f7 99%, transparent), linear-gradient(90deg, transparent 9px, #00a7f7 9px 84px, #c5ced9 84px 126px, transparent 126px);
  }
  &::-webkit-slider-thumb { appearance: none; width: 22px; height: 22px; margin-top: -8px; border-radius: 50%; background: #00a7f7; border: 3px solid #fff; box-shadow: 0 1px 3px #0008; }
`;
const ZoomPair = styled.div`
  position: relative; width: 57px; height: 28px; border-radius: 3px; background: #fff; display: grid; grid-template-columns: 1fr 1fr; color: #333;
  button { display: grid; place-items: center; }
  button + button { border-left: 1px solid #c9d1da; height: 20px; margin-top: 4px; }
`;
const HelpDot = styled(Dot)`position: absolute; right: -6px; top: -10px;`;

const Strip = styled.div`height: 176px; flex: none; display: flex; gap: 1px; background: #1d1c1b;`;
const Tile = styled.figure<{ $on?: boolean }>`
  position: relative; flex: 1 1 0; min-width: 0; margin: 1px 0 2px; display: flex; flex-direction: column; background: linear-gradient(#08469a, #5b84a8 156px);
  outline: ${p => (p.$on ? "3px solid #2ecc71" : "none")}; outline-offset: -3px; z-index: ${p => (p.$on ? 1 : 0)};
`;
const TileMain = styled.div`flex: 1; display: grid; place-items: center; padding-top: 15px;`;
const Avatar = styled.span`
  width: 88px; height: 88px; border-radius: 50%; background: #e1e8ee; border: 1px solid #fff; color: #4a4a4a; font-size: 35px; display: grid; place-items: center;
`;
const Caption = styled.figcaption`
  height: 18px; padding: 0 5px; display: flex; align-items: center; gap: 6px; background: #303c46; color: #fff; font-size: 12px; margin: 0 3px 0 0;
  span { flex: 1; }
`;
const SelfTile = styled.div`
  position: relative; width: 311px; flex: none; background: #333f50; display: grid; place-items: center;
  > svg:nth-of-type(1) { position: absolute; left: 7px; top: 4px; } > svg:nth-of-type(2) { position: absolute; right: 7px; top: 4px; }
`;
const SelfMic = styled.span`position: absolute; right: 5px; bottom: 6px; width: 30px; height: 30px; border-radius: 50%; background: #bcc3ce; display: grid; place-items: center;`;

const People = styled.aside`border-left: 1px solid #c9ced6; background: #fff; display: flex; flex-direction: column; color: #4a5769;`;
const PeopleTabs = styled.nav`height: 66px; display: flex; padding: 22px 20px 0 27px; border-bottom: 1px solid #e0e4ea;`;
const PeopleTab = styled.button<{ $on?: boolean }>`
  position: relative; flex: 1; height: 47px; display: flex; flex-direction: column; align-items: center; gap: 4px; font-size: 11px; font-weight: 500;
  color: ${p => (p.$on ? "#00a7f7" : "#7f8b9c")}; border-bottom: 4px solid ${p => (p.$on ? "#00a7f7" : "transparent")};
`;
const Count = styled.span`
  position: absolute; left: 36px; top: -4px; width: 18px; height: 15px; border-radius: 8px; background: #e1e8ee; color: #4a5769; font-size: 9px; line-height: 15px;
`;
const Segment = styled.div`height: 24px; margin: 15px 20px 0; border-radius: 12px; overflow: hidden; display: grid; grid-template-columns: 1fr 1fr; font-size: 11px; font-weight: 500;`;
const SegButton = styled.button<{ $on?: boolean }>`
  display: flex; align-items: center; justify-content: center; gap: 8px; background: ${p => (p.$on ? "#00a7f7" : "#e1e8ee")}; color: ${p => (p.$on ? "#fff" : "#4a5769")};
`;
const SearchBox = styled.label`
  height: 32px; margin: 23px 10px 0; border: 1px solid #c5cdd8; display: flex; align-items: center; gap: 20px; padding-left: 8px; color: #9aa7b8;
  input { border: 0; outline: 0; flex: 1; min-width: 0; font: 12px ${ui}; color: #777; background: none; } input::placeholder { color: #858585; opacity: 1; }
`;
const List = styled.ul`margin-top: 12px; flex: 1;`;
const PersonRow = styled.li<{ $me?: boolean }>`
  height: 40px; padding: 0 15px 0 13px; display: grid; grid-template-columns: 18px auto 1fr auto; align-items: center; font-size: 13px; font-weight: ${p => (p.$me ? 700 : 400)};
`;
const PersonName = styled.span`display: flex; align-items: center; gap: 3px; color: #4a5769; svg { color: #c5cdd8; }`;
const Joined = styled.span`display: flex; align-items: center; gap: 7px; justify-content: flex-end; color: #8b96a5; padding-right: 35px;`;
const Devices = styled.span`display: flex; align-items: center; gap: 15px; > svg:first-child:nth-last-child(3) { margin-right: 5px; }`;
const PeopleFoot = styled.footer`padding: 12px 16px 17px; &::before { content: ""; display: block; height: 1px; margin: -12px 4px 11px; background: #d9e0e8; }`;
const RaiseHand = styled.button`
  width: 100%; height: 22px; border-radius: 11px; background: #c8cfd8; color: #55606f; font-size: 12px; display: flex; align-items: center; justify-content: center; gap: 6px;
`;
const LinkBox = styled.div`
  margin-top: 11px; height: 36px; border: 2px solid #00a7f7; border-radius: 3px; display: grid; grid-template-columns: 57px 1fr; background: #fff;
  button { background: #00a7f7; color: #fff; display: grid; place-items: center; }
  a { display: grid; place-items: center; color: #00a0ee; font-size: 11px; font-weight: 500; text-decoration: none; }
`;
const EdgeClose = styled.button`
  position: absolute; right: 300px; top: 49px; width: 39px; height: 39px; border-radius: 50%; background: #fff; border: 1px solid #cbd3dd; color: #7f8b9c; display: grid; place-items: center;
`;

const heads = ["Step #", "NX ARR.", "Q² GeV²", "BB deg.", "BB m", "SBS deg.", "SBS m", "HCAL deg.", "HCAL m", "HRSBL deg.", "B Line", "Flr Config."];
const headSize: Record<string, number> = { "HRSBL deg.": 17, "Flr Config.": 19 };
type Row = { cells: string[]; yellow: number[]; red: number[] } | { step: string; mid?: string; note?: string; wide?: string };
const prep: Row[] = [
  { cells: ["Prep.", "Prep.", "0.0", "33.1º", "1.80", "23.3º", "2.25", "see SBS", "17.0", "105.0º", "3", "1"], yellow: [4, 6, 9, 11], red: [3, 5, 8, 10] },
  { step: "Com1a", wide: "" },
  { step: "Temp.", wide: "Removal of BB Spectrometer and start to move HRSBL to 50º" },
];
const calib: Row[] = [
  { cells: ["Com2a", "Com2a", "Beam", "N/A", "N/A", "23.3º", "3.10", "see SBS", "17.0", "50.0º", "3", "1"], yellow: [3, 4, 6, 11], red: [5, 8, 9, 10] },
  { step: "Com2b", mid: "Beam", note: "move SBS due to link interference" },
  { step: "Com2c", mid: "4.12" },
  { cells: ["Com3a", "Com3a", "0.0", "N/A", "N/A", "20.5º", "3.10", "see SBS", "17.0", "42.0º", "3", "1"], yellow: [3, 4, 6, 11], red: [5, 8, 9, 10] },
  { step: "Com3b", mid: "Beam", note: "link interference" },
  { step: "Com3c", mid: "5.08" },
  { step: "Com4a", wide: "move HRS-BL to 105.0º" },
];
const SettingsTable = ({ rows }: { rows: Row[] }) => (
  <DocTable>
    <thead><tr>{heads.map(h => <HeadCell key={h} $s={headSize[h]}>{h}</HeadCell>)}</tr></thead>
    <tbody>
      {rows.map((r, i) => "cells" in r ? (
        <tr key={i}>{r.cells.map((c, n) => <Cell key={n} $line $y={r.yellow.includes(n)} $red={r.red.includes(n)} $b={n === 1 || n === 11}>{c}</Cell>)}</tr>
      ) : r.wide !== undefined ? (
        <tr key={i}><Cell $line>{r.step}</Cell><Cell $left colSpan={11}>{r.wide}</Cell></tr>
      ) : (
        <tr key={i}><Cell $line>{r.step}</Cell><Cell /><Cell>{r.mid}</Cell><Cell colSpan={3} /><Cell $left colSpan={6}>{r.note}</Cell></tr>
      ))}
    </tbody>
  </DocTable>
);

const SharedPdf = () => (
  <Share>
    <PdfTitle>
      <PdfName>
        <svg width="11" height="10" viewBox="0 0 12 12"><path d="M0 0h9l3 3v9H0z" fill="#eee" /><path d="M0 0h8v5H0z" fill="#c33" /><path d="m2 11 4-5 4 4" stroke="#c33" fill="none" /></svg>
        <span>2021.06.07a - SBS Neutron FF Kinematic Settings.pdf - Adobe Acrobat Reader 2017</span>
        <Minus size={12} color="#000" /><Spacer $w={26} />
      </PdfName>
      <PdfMenu>{["File", "Edit", "View", "Window", "Help"].map(m => <button key={m}>{m}</button>)}</PdfMenu>
    </PdfTitle>
    <PdfTabs>
      <PdfTab $home $w={56}>Home</PdfTab><PdfTab $home $w={66}>Tools</PdfTab><Spacer $w={8} />
      <PdfTab $w={161}>App G - Constructi...</PdfTab><PdfTab $w={161}>_Jefferson Lab Hall ...</PdfTab>
      <PdfTab $w={161}>SBS-detectors.pdf</PdfTab><PdfTab $w={161}>2021.04.21 Hall-A ...</PdfTab>
      <PdfTab $on $w={161}>2021.06.07a - SBS ...<b>×</b></PdfTab>
      <Spacer />
      <PdfTool $w={37} aria-label="Help"><CircleQuestionMark size={20} /></PdfTool>
    </PdfTabs>
    <PdfTools>
      <PdfTool $w={35} $dim aria-label="Save"><Save size={20} /></PdfTool>
      <PdfTool aria-label="Share"><CloudUpload size={21} /></PdfTool>
      <PdfTool aria-label="Print"><Printer size={20} strokeWidth={2.6} /></PdfTool>
      <PdfTool aria-label="Mail"><Mail size={21} /></PdfTool>
      <PdfTool aria-label="Find"><Search size={20} strokeWidth={2.4} /></PdfTool>
      <Sep $l={9} $r={14} />
      <PdfTool $w={28} $dim aria-label="Previous page"><CircleArrowUp size={20} /></PdfTool>
      <PdfTool $w={28} $dim aria-label="Next page"><CircleArrowDown size={20} /></PdfTool>
      <Spacer $w={12} />
      <PageBox aria-label="Page" defaultValue="1" />/ 1
      <Sep $l={16} $r={9} />
      <PdfTool aria-label="Select"><Pointer s={22} c="#1770c8" fill="#1770c8" /></PdfTool>
      <PdfTool aria-label="Pan"><Hand size={21} /></PdfTool>
      <Spacer $w={6} />
      <PdfTool $w={28} aria-label="Zoom out"><CircleMinus size={21} /></PdfTool>
      <PdfTool $w={28} aria-label="Zoom in"><CirclePlus size={21} /></PdfTool>
      <ZoomBox><select aria-label="Zoom"><option>200%</option></select><svg width="8" height="6"><path d="M0 0H8L4 6Z" fill="#666" /></svg></ZoomBox>
      <PdfTool aria-label="Fit width"><Line s={21} w={1.8} d="M3 0V5H17V0M3 20V9H13L17 13V20M5 17H15M7 15 5 17 7 19M13 15 15 17 13 19" /></PdfTool>
      <PdfTool aria-label="Fit page"><Line s={21} w={1.8} d="M3 1H13L17 5V19H3ZM10 5V8M10 12V15M5 10H8M12 10H15" /></PdfTool>
      <PdfTool aria-label="Full screen"><Line s={21} w={1.9} d="M2 2H18V18H2ZM11 9 15 5M11 5H15V9M9 11 5 15M5 11V15H9" /></PdfTool>
      <PdfTool aria-label="Read mode"><Line s={21} w={1.8} d="M1 2H19V9H1ZM4 5H16M10 11V19M7 16 10 19 13 16" /></PdfTool>
      <Sep $l={9} $r={8} />
      <PdfTool aria-label="Comment"><Line s={21} w={1.8} d="M4 15A8 7.500 0 1 1 9 17L3 19ZM7 8H14M7 11H12" /></PdfTool>
      <PdfTool aria-label="Highlight"><Line s={21} w={1.8} d="M2 18 5 11 14 1 18 4 10 14 4 17M5 11 10 14M12 18H18" /></PdfTool>
    </PdfTools>
    <Page>
      <DocNote>2021.06.07 - Floor Plate Config. up-dated by Soova</DocNote>
      <DocTitle>SBS FF Kinematic Settings</DocTitle>
      <DocHead><h3>GMn 09019 Preparation (Initial Test Setup)</h3><strong>HRS-BR deg. 140.0º</strong></DocHead>
      <SettingsTable rows={prep} />
      <DocHead><h3>GMn 09019 Calibration Points</h3><strong>HRS-BR deg. 140.0º</strong></DocHead>
      <SettingsTable rows={calib} />
    </Page>
    <PdfStatus><span>11.00 x 17.00 in</span><ChevronLeft size={12} strokeWidth={3} /><i /></PdfStatus>
    <ShareBottom />
    <HandPointer width="20" height="24" viewBox="0 0 20 24"><path d="M6 13V3q0-2 2-2t2 2v6l6 1.500q2 .5 2 3V17l-2 5H9L4 16q-1-3 2-3z" fill="#bdbdbd" stroke="#333" strokeWidth="1.5" /></HandPointer>
  </Share>
);

const tiles: [string, string, boolean, boolean][] = [
  ["JB", "Jessie Butler", false, false], ["RW", "ROBIN WINES", false, false], ["CS", "Chris Soova", false, true],
  ["DS", "Danovic Spell", false, false], ["DH", "Derek Henley", true, true],
];
const people: { n: string; cam?: boolean; mic?: boolean; share?: boolean; joined?: boolean; me?: boolean }[] = [
  { n: "Jack Segal (me)", me: true }, { n: "Chris Soova", mic: true }, { n: "Danovic Spell", cam: true, mic: true }, { n: "Derek Henley" },
  { n: "Jessie Butler", mic: true, share: true }, { n: "Josh Armstrong", mic: true }, { n: "ROBIN WINES", mic: true },
  { n: "ROBIN WINES", joined: true }, { n: "Ryan Biraben" }, { n: "Whit Seay" },
];

const PeoplePanel = () => (
  <People>
    <PeopleTabs>
      <PeopleTab $on>
        <svg width="25" height="25" viewBox="0 0 25 25" fill="none" stroke="currentColor" strokeWidth="1.8"><path d="M12 2C8 2 7 5 7 8 7 12 9 13 9 15 9 18 1 17 1 23H23C23 17 15 18 15 15 15 13 17 12 17 8 17 5 16 2 12 2Z" /></svg>
        PEOPLE<Count>10</Count>
      </PeopleTab>
      <PeopleTab>
        <svg width="25" height="25" viewBox="0 0 25 25" fill="none" stroke="currentColor" strokeWidth="1.8"><path d="M1 3H24V18H19V22L12 18H1Z" /></svg>
        CHAT
      </PeopleTab>
      <PeopleTab>
        <svg width="25" height="25" viewBox="0 0 25 25" fill="none" stroke="currentColor" strokeWidth="1.8"><path d="M3 4H22V22H3Z" /><path d="M6.500 9H19M6.500 13H19M6.500 17H19" strokeWidth="2.5" strokeDasharray="3 1.6" /></svg>
        APPS
      </PeopleTab>
      <PeopleTab><Settings size={25} strokeWidth={1.7} />SETTINGS</PeopleTab>
    </PeopleTabs>
    <Segment><SegButton $on>EVERYONE</SegButton><SegButton>ACTIVE<Dot>?</Dot></SegButton></Segment>
    <SearchBox><Search size={17} strokeWidth={1.6} /><input placeholder="Search" aria-label="Search" /></SearchBox>
    <List>
      {people.map((p, i) => (
        <PersonRow key={i} $me={p.me}>
          <span>{p.joined && <Star size={11} fill="#a5defb" stroke="none" />}</span>
          <PersonName>{p.n}{!p.joined && <ChevronRight size={16} strokeWidth={2.6} />}</PersonName>
          <Joined>{p.joined && <><Check size={12} strokeWidth={3} color="#5fd090" />Joined</>}</Joined>
          <Devices>
            {p.share && <Monitor size={17} color="#c5cdd8" />}
            {p.cam ? <CamOn /> : <CamOff />}{p.mic ? <MicOn s={17} /> : <MicOff s={17} />}
          </Devices>
        </PersonRow>
      ))}
    </List>
    <PeopleFoot>
      <RaiseHand><Hand size={13} fill="currentColor" />RAISE HAND</RaiseHand>
      <LinkBox><button aria-label="Copy link"><Link2 size={20} strokeWidth={2.2} /></button><a href="#join">https://jlab.bluejeans.com/3068373690</a></LinkBox>
    </PeopleFoot>
  </People>
);

const Meeting = () => (
  <MeetWindow aria-label="ROBIN's Meeting">
    <MeetTitle>
      <Brand>
        <svg width="12" height="12" viewBox="0 0 12 12" stroke="#999" strokeWidth="1.5"><path d="M0 3H12M0 8H12" /></svg>
        <span>Jefferson Lab<svg width="20" height="10" viewBox="0 0 20 10"><path d="M1 4Q10-2 18 3 17 6 8 8" fill="none" stroke="#e08a8a" /></svg></span>
      </Brand>
      <h1>ROBIN's Meeting</h1>
      <TitleTools>
        <TitleItem $mr={24}><Gift size={15} strokeWidth={1.3} />What's New</TitleItem>
        <TitleItem $mr={24}><Dot $soft>?</Dot>Help</TitleItem>
        <TitleItem $mr={12}>
          <svg width="16" height="16" viewBox="0 0 16 16"><circle cx="8" cy="8" r="7.3" fill="#fff" stroke="#888" /><circle cx="8" cy="6.5" r="2.8" fill="#bccbd9" /><path d="M3 13q5-5 10 0-5 4-10 0z" fill="#bccbd9" /></svg>
          <ChevronDown size={10} strokeWidth={3} />
        </TitleItem>
        <WinButton $w={45} aria-label="Minimize"><Minus size={13} /></WinButton>
        <WinButton $w={45} aria-label="Maximize"><Square size={12} /></WinButton>
        <WinButton $w={46} aria-label="Close"><X size={16} strokeWidth={1.5} /></WinButton>
      </TitleTools>
    </MeetTitle>
    <MeetBody>
      <Stage>
        <ShareRow><SharedPdf /></ShareRow>
        <Strip>
          {tiles.map(([ini, name, muted, sig], i) => (
            <Tile key={ini} $on={i === 0}>
              <TileMain><Avatar>{ini}</Avatar></TileMain>
              <Caption><span>{name}</span>{muted ? <MicOff s={13} c="#ff3366" bg="#303c46" /> : <MicOn s={13} c="#fff" />}{sig && <Signal s={13} />}</Caption>
            </Tile>
          ))}
          <Spacer $w={36} />
          <SelfTile>
            <CamOff s={20} c="#ff3366" bg="#333f50" /><Signal s={15} /><Avatar>JS</Avatar>
            <SelfMic><MicOff s={20} c="#ff3366" bg="#bcc3ce" /></SelfMic>
          </SelfTile>
        </Strip>
        <Floaters>
          <LayoutBox><LayoutRange type="range" min={0} max={3} defaultValue={2} aria-label="Layout" /></LayoutBox>
          <ZoomPair>
            <button aria-label="Zoom out"><Minus size={16} color="#aaa" /></button><button aria-label="Zoom in"><Plus size={17} strokeWidth={2.4} /></button>
            <HelpDot $s={18}>?</HelpDot>
          </ZoomPair>
        </Floaters>
      </Stage>
      <PeoplePanel />
    </MeetBody>
    <Controls>
      <Round $bg="#b4bcc8" aria-label="Camera"><CamOff s={26} c="#ff3b69" bg="#b4bcc8" /><MiniDrop><ChevronDown size={10} strokeWidth={3} /></MiniDrop></Round>
      <Round $bg="#b4bcc8" aria-label="Microphone"><MicOff s={24} c="#ff3b69" bg="#b4bcc8" /><MiniDrop><ChevronDown size={10} strokeWidth={3} /></MiniDrop></Round>
      <Round $bg="#fff" aria-label="Share screen"><Monitor size={25} strokeWidth={1.7} color="#39465a" /></Round>
      <Round $bg="#ff3b69" $s={40} aria-label="Leave meeting">
        <svg width="24" height="14" viewBox="0 0 24 14" fill="none" stroke="#fff" strokeWidth="1.9"><path d="M2 8Q3 2 12 2T22 8V12L16 11V8Q12 7 8 8V11L2 12Z" /></svg>
      </Round>
    </Controls>
    <Pager>
      <PageArrow $dim aria-label="Previous"><ChevronLeft size={21} strokeWidth={2.4} /></PageArrow>
      <PageArrow aria-label="Next"><ChevronRight size={21} strokeWidth={2.8} /></PageArrow>
    </Pager>
    <EdgeClose aria-label="Close panel"><X size={18} /></EdgeClose>
  </MeetWindow>
);

/* ---------- taskbar ---------- */

const Taskbar = styled.footer`height: 40px; flex: none; display: flex; background: #d5d5d5; color: #111; font-size: 14px;`;
const TaskButton = styled.button<{ $w?: number; $on?: boolean; $run?: boolean }>`
  width: ${p => p.$w ?? 49}px; height: 40px; display: grid; place-items: center; position: relative;
  ${p => p.$on && css`background: #ececec; border-bottom: 2px solid #0a7bd6;`}
  ${p => p.$run && css`background: linear-gradient(#0a7bd6, #0a7bd6) 50% 100% / 40px 2px no-repeat;`}
`;
const TaskSearch = styled.label`
  width: 342px; margin: 1px 0; background: #fff; border: 1px solid #ccc; display: flex; align-items: center; gap: 10px; padding-left: 10px;
  svg { transform: scaleX(-1); } input { flex: 1; min-width: 0; border: 0; outline: 0; background: none; } input::placeholder { color: #3c3c3c; opacity: 1; }
`;
const Weather = styled.button`display: flex; align-items: center; gap: 9px; margin-right: 7px;`;
const Clock = styled.div`width: 64px; text-align: center; font-size: 12px; line-height: 17px; padding-top: 1px; margin: 0 12px 0 0;`;
const Tray = styled.div`display: flex; align-items: center;`;
const EndLine = styled.i`width: 5px; height: 40px; border-left: 1px solid #9a9a9a; margin-left: 18px;`;

const Notepad = () => <Svg s={24}><path d="M14 4 44 8 36 44 6 38Z" fill="#8fc4d0" stroke="#5b8a96" strokeWidth="2" /><path d="M14 4 44 8 42 14 12 10z" fill="#ddd" /></Svg>;
const apps: { n: string; art: React.ReactNode; on?: boolean; run?: boolean }[] = [
  { n: "Cortana", art: <svg width="18" height="18"><circle cx="9" cy="9" r="7" fill="none" stroke="#111" strokeWidth="2.2" /></svg> },
  { n: "Task view", art: <svg width="18" height="16" viewBox="0 0 18 16" fill="none" stroke="#111" strokeWidth="1.3"><path d="M1 5H12V11H1ZM1 0V3H12V0M1 16V13H12V16M16 0V3M16 13V16M16 5V11" /></svg> },
  { n: "File Explorer", art: <Svg s={24}><path d="M4 6H18L22 10H44V42H4Z" fill="#f4b72f" /><path d="M4 14H44V42H4Z" fill="#ffd868" /><path d="M12 42V28H36V42H30V34H18V42Z" fill="#3a96dd" /></Svg> },
  { n: "Microsoft Store", art: <Svg s={26}><path d="M16 14V4H32V14" fill="none" stroke="#222" strokeWidth="3" /><path d="M5 13H43V45H5Z" fill="#232323" /><path d="M17 20h6v6h-6z" fill="#f25022" /><path d="M25 20h6v6h-6z" fill="#7fba00" /><path d="M17 28h6v6h-6z" fill="#00a4ef" /><path d="M25 28h6v6h-6z" fill="#ffb900" /></Svg> },
  { n: "Lightning", art: <Svg s={26}><path d="M3 2H45V46H3Z" fill="#242342" /><path d="M28 8 16 25H25L20 40 33 22H24Z" fill="#2e9cf5" /></Svg> },
  { n: "Firefox", art: <FirefoxArt s={26} /> },
  { n: "Calculator", art: <Svg s={26}><path d="M7 3H41V45H7Z" fill="#44596b" /><path d="M10 6H38V16H10Z" fill="#19b5ef" /><path d="M10 20h8v5h-8zM20 20h8v5h-8zM10 28h8v5h-8zM20 28h8v5h-8zM10 36h8v5h-8zM20 36h8v5h-8z" fill="#d4dbe0" /><path d="M30 20h8v21h-8z" fill="#1b4c84" /></Svg> },
  { n: "Notepad", art: <Notepad /> },
  { n: "Paint 3D", on: true, art: <Svg s={26}><path d="M24 1Q6 24 8 32L40 28Q38 20 24 1Z" fill="#f8b03c" /><path d="M30 10Q42 26 40 34L12 30Q26 30 30 10Z" fill="#e6427c" /><path d="M8 30Q24 34 40 30 40 46 24 46T8 30Z" fill="#3f78dd" /></Svg> },
  { n: "Remote Desktop", art: <Svg s={26}><path d="M6 4 34 8V32L8 28Z" fill="#1f3fd0" stroke="#aab" strokeWidth="2" /><path d="M14 36H28V42H10Z" fill="#aaa" /><circle cx="35" cy="37" r="9" fill="#eee" stroke="#777" /><path d="m31 33 4 4-4 4M40 33l-3 4 3 4" stroke="#2a9a3a" strokeWidth="2" fill="none" /></Svg> },
  { n: "Edge", art: <EdgeArt s={25} /> },
  { n: "Chrome", art: <ChromeArt s={25} /> },
  { n: "PuTTY", run: true, art: <PuttyArt s={26} /> },
  { n: "BlueJeans", run: true, art: <Svg s={25}><path d="M2 6H32V42H2Z" fill="#1f7fd0" /><path d="M36 18 46 8V40L36 30Z" fill="#1f9ee8" /><text x="9" y="34" fontSize="27" fontWeight="700" fill="#fff" fontFamily={doc}>B</text></Svg> },
  { n: "Capture", run: true, art: <Svg s={26}><path d="M12 4H36V14H12Z" fill="#999" stroke="#000" strokeWidth="2" /><path d="M12 14H36V46H12Z" fill="#eee" stroke="#000" strokeWidth="3" /><path d="M17 22H31V42H17Z" fill="#0b0b70" /><path d="M17 14h4v6h-4zM28 14h4v6h-4z" fill="#d22" /></Svg> },
];

const TaskbarRow = () => (
  <Taskbar>
    <TaskButton aria-label="Start"><svg width="16" height="16" viewBox="0 0 16 16"><path d="M0 2.300 6.500 1.400V7.600H0ZM7.300 1.300 16 0V7.600H7.300ZM0 8.400H6.500V14.600L0 13.700ZM7.300 8.400H16V16L7.300 14.700Z" /></svg></TaskButton>
    <TaskSearch><Search size={17} strokeWidth={1.6} /><input placeholder="Type here to search" aria-label="Type here to search" /></TaskSearch>
    {apps.map(a => <TaskButton key={a.n} aria-label={a.n} $on={a.on} $run={a.run}>{a.art}</TaskButton>)}
    <Spacer />
    <Tray>
      <TaskButton $w={41} aria-label="HP Support"><HelpArt s={22} /></TaskButton>
      <TaskButton $w={41} aria-label="People"><Users size={16} strokeWidth={1.6} /></TaskButton>
      <Spacer $w={96} />
      <Weather>
        <svg width="21" height="20" viewBox="0 0 21 20"><circle cx="11" cy="9" r="8.5" fill="#fdb62f" /><path d="M1 13q0-3 4-3 3-4 7-2 4-1 5 2 3 0 3 2t-3 2H4q-3 1-3-1z" fill="#d9d0c4" /><path d="M2 16H17" stroke="#b59f87" /></svg>
        <span>77°F</span><span>Haze</span>
      </Weather>
      <TaskButton $w={24} aria-label="Show hidden icons"><ChevronUp size={17} strokeWidth={1.8} /></TaskButton>
      <TaskButton $w={24} aria-label="Meet now"><Video size={15} strokeWidth={1.7} /></TaskButton>
      <TaskButton $w={24} aria-label="Volume"><Volume2 size={17} strokeWidth={1.6} /></TaskButton>
      <Clock>9:28 AM<br />7/21/2021</Clock>
      <MessageSquare size={19} strokeWidth={1.6} />
      <EndLine />
    </Tray>
  </Taskbar>
);

export default function App() {
  return (
    <Desktop>
      <Global />
      <Workspace>
        <IconGrid>
          {icons.map(([c, r, label, art, short]) => (
            <IconItem key={`${c}-${r}`} $c={c} $r={r}><Picture>{art}{short && <ShortcutMark />}</Picture>{label}</IconItem>
          ))}
        </IconGrid>
        <Meeting />
        <Paint />
      </Workspace>
      <TaskbarRow />
    </Desktop>
  );
}
